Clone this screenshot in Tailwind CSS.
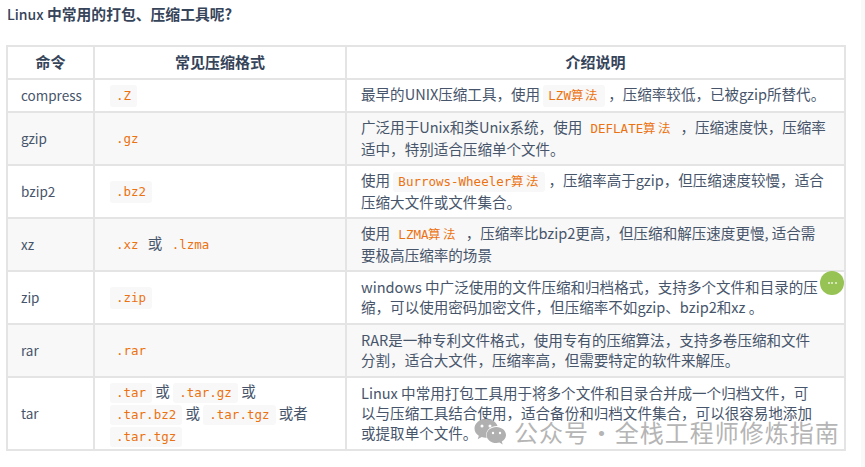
<!DOCTYPE html>
<html lang="zh-CN">
<head>
    <meta charset="UTF-8">
    <title>Linux 压缩工具</title>
    <script src="https://cdn.jsdelivr.net/npm/@tailwindcss/browser@4"></script>
</head>
<body class="w-[865px] h-[467px] overflow-hidden bg-white relative text-[#47556b] font-['Noto_Sans_CJK_SC','Noto_Sans',sans-serif] text-[14.55px]">
    <div class="absolute top-0 right-0 h-full w-[4px] bg-[#f9f9f9]"></div>
    <div class="pl-[6px] pt-[3px]">
        <p class="pl-[1px] h-[42px] text-[14.8px] leading-[22px] font-bold text-[#36445a]"><span class="font-medium text-[14px]">Linux</span> 中常用的打包、压缩工具呢?</p>
        <table class="table-fixed border-collapse w-[838px] leading-[20px]">
            <colgroup>
                <col class="w-[87px]">
                <col class="w-[252px]">
                <col class="w-[499px]">
            </colgroup>
            <thead>
                <tr class="h-[33px] text-[15px]">
                    <th class="border-2 border-[#e4e4e4] font-bold text-[#36445a] pb-[1px]">命令</th>
                    <th class="border-2 border-[#e4e4e4] font-bold text-[#36445a] pb-[1px]">常见压缩格式</th>
                    <th class="border-2 border-[#e4e4e4] font-bold text-[#36445a] pb-[1px]">介绍说明</th>
                </tr>
            </thead>
            <tbody>
                <tr class="h-[33px]">
                    <td class="border-2 border-[#e4e4e4] px-[13px] pb-[2px] text-[13.5px]">compress</td>
                    <td class="border-2 border-[#e4e4e4] px-[15px]"><code class="inline-block bg-[#f8f8f8] rounded-[3px] px-[6px] leading-[22px] font-['DejaVu_Sans_Mono',monospace] text-[12.5px] text-[#ec7211]">.Z</code></td>
                    <td class="border-2 border-[#e4e4e4] pl-[14px] pr-[12px] pb-[1px]">最早的UNIX压缩工具&#xFF0C;使用 <code class="inline-block bg-[#f8f8f8] rounded-[3px] px-[5px] leading-[22px] font-['DejaVu_Sans_Mono',monospace] text-[12.5px] text-[#ec7211]">LZW<span class="text-[12.5px] tracking-[1.5px]">算法</span></code> &#xFF0C;压缩率较低&#xFF0C;已被gzip所替代。</td>
                </tr>
                <tr class="h-[53px] bg-[#f8f8f8]">
                    <td class="border-2 border-[#e4e4e4] px-[13px] pb-[2px] text-[13.5px]">gzip</td>
                    <td class="border-2 border-[#e4e4e4] px-[15px]"><code class="inline-block rounded-[3px] px-[6px] leading-[22px] font-['DejaVu_Sans_Mono',monospace] text-[12.5px] text-[#ec7211]">.gz</code></td>
                    <td class="border-2 border-[#e4e4e4] pl-[14px] pr-[12px] pb-[1px]">广泛用于Unix和类Unix系统&#xFF0C;使用 <code class="inline-block rounded-[3px] px-[5px] leading-[20px] font-['DejaVu_Sans_Mono',monospace] text-[12.5px] text-[#ec7211]">DEFLATE<span class="text-[12.5px] tracking-[1.5px]">算法</span></code> &#xFF0C;压缩速度快&#xFF0C;压缩率适中&#xFF0C;特别适合压缩单个文件。</td>
                </tr>
                <tr class="h-[53px]">
                    <td class="border-2 border-[#e4e4e4] px-[13px] pb-[2px] text-[13.5px]">bzip2</td>
                    <td class="border-2 border-[#e4e4e4] px-[15px]"><code class="inline-block bg-[#f8f8f8] rounded-[3px] px-[6px] leading-[22px] font-['DejaVu_Sans_Mono',monospace] text-[12.5px] text-[#ec7211]">.bz2</code></td>
                    <td class="border-2 border-[#e4e4e4] pl-[14px] pr-[12px] pb-[1px]">使用 <code class="inline-block bg-[#f8f8f8] rounded-[3px] px-[5px] leading-[20px] font-['DejaVu_Sans_Mono',monospace] text-[12.5px] text-[#ec7211]">Burrows-Wheeler<span class="text-[12.5px] tracking-[1.5px]">算法</span></code> &#xFF0C;压缩率高于gzip&#xFF0C;但压缩速度较慢&#xFF0C;适合压缩大文件或文件集合。</td>
                </tr>
                <tr class="h-[53px] bg-[#f8f8f8]">
                    <td class="border-2 border-[#e4e4e4] px-[13px] pb-[2px] text-[13.5px]">xz</td>
                    <td class="border-2 border-[#e4e4e4] px-[15px]"><code class="inline-block rounded-[3px] px-[6px] leading-[22px] font-['DejaVu_Sans_Mono',monospace] text-[12.5px] text-[#ec7211]">.xz</code> 或 <code class="inline-block rounded-[3px] px-[6px] leading-[22px] font-['DejaVu_Sans_Mono',monospace] text-[12.5px] text-[#ec7211]">.lzma</code></td>
                    <td class="border-2 border-[#e4e4e4] pl-[14px] pr-[12px] pb-[1px]">使用 <code class="inline-block rounded-[3px] px-[5px] leading-[20px] font-['DejaVu_Sans_Mono',monospace] text-[12.5px] text-[#ec7211]">LZMA<span class="text-[12.5px] tracking-[1.5px]">算法</span></code> &#xFF0C;压缩率比bzip2更高&#xFF0C;但压缩和解压速度更慢, 适合需<br>要极高压缩率的场景</td>
                </tr>
                <tr class="h-[53px]">
                    <td class="border-2 border-[#e4e4e4] px-[13px] pb-[2px] text-[13.5px]">zip</td>
                    <td class="border-2 border-[#e4e4e4] px-[15px]"><code class="inline-block bg-[#f8f8f8] rounded-[3px] px-[6px] leading-[22px] font-['DejaVu_Sans_Mono',monospace] text-[12.5px] text-[#ec7211]">.zip</code></td>
                    <td class="border-2 border-[#e4e4e4] pl-[14px] pr-[12px] pb-[1px]">windows 中广泛使用的文件压缩和归档格式&#xFF0C;支持多个文件和目录的压缩&#xFF0C;可以使用密码加密文件&#xFF0C;但压缩率不如gzip、bzip2和xz 。</td>
                </tr>
                <tr class="h-[53px] bg-[#f8f8f8]">
                    <td class="border-2 border-[#e4e4e4] px-[13px] pb-[2px] text-[13.5px]">rar</td>
                    <td class="border-2 border-[#e4e4e4] px-[15px]"><code class="inline-block rounded-[3px] px-[6px] leading-[22px] font-['DejaVu_Sans_Mono',monospace] text-[12.5px] text-[#ec7211]">.rar</code></td>
                    <td class="border-2 border-[#e4e4e4] pl-[14px] pr-[12px] pb-[1px]">RAR是一种专利文件格式&#xFF0C;使用专有的压缩算法&#xFF0C;支持多卷压缩和文件<br>分割&#xFF0C;适合大文件&#xFF0C;压缩率高&#xFF0C;但需要特定的软件来解压。</td>
                </tr>
                <tr class="h-[73px]">
                    <td class="border-2 border-[#e4e4e4] px-[13px] pb-[2px] text-[13.5px]">tar</td>
                    <td class="border-2 border-[#e4e4e4] px-[15px]">
                        <code class="inline-block bg-[#f8f8f8] rounded-[3px] px-[6px] leading-[20px] font-['DejaVu_Sans_Mono',monospace] text-[12.5px] text-[#ec7211]">.tar</code> 或 <code class="inline-block bg-[#f8f8f8] rounded-[3px] px-[6px] leading-[20px] font-['DejaVu_Sans_Mono',monospace] text-[12.5px] text-[#ec7211]">.tar.gz</code> 或<br>
                        <code class="inline-block bg-[#f8f8f8] rounded-[3px] px-[6px] leading-[20px] font-['DejaVu_Sans_Mono',monospace] text-[12.5px] text-[#ec7211]">.tar.bz2</code> 或 <code class="inline-block bg-[#f8f8f8] rounded-[3px] px-[6px] leading-[20px] font-['DejaVu_Sans_Mono',monospace] text-[12.5px] text-[#ec7211]">.tar.tgz</code> 或者<br>
                        <code class="inline-block bg-[#f8f8f8] rounded-[3px] px-[6px] leading-[20px] font-['DejaVu_Sans_Mono',monospace] text-[12.5px] text-[#ec7211]">.tar.tgz</code>
                    </td>
                    <td class="border-2 border-[#e4e4e4] pl-[14px] pr-[12px] pb-[1px]">Linux 中常用打包工具用于将多个文件和目录合并成一个归档文件&#xFF0C;可<br>以与压缩工具结合使用&#xFF0C;适合备份和归档文件集合&#xFF0C;可以很容易地添加<br>或提取单个文件。</td>
                </tr>
            </tbody>
        </table>
    </div>

    <!-- floating button over the table -->
    <div class="absolute left-[820px] top-[271px] w-[24px] h-[24px] rounded-full bg-[#97c254] flex items-center justify-center gap-[1.5px]">
        <span class="w-[2px] h-[2px] rounded-full bg-white/80"></span>
        <span class="w-[2px] h-[2px] rounded-full bg-white/80"></span>
        <span class="w-[2px] h-[2px] rounded-full bg-white/80"></span>
    </div>

    <!-- watermark -->
    <div class="absolute left-[474px] top-[418px] flex items-center">
        <svg width="33" height="28" viewBox="0 0 33 28">
            <path fill="#b0b0b0" d="M12 1C5.6 1 .5 5.2.5 10.500c0 3 1.700 5.600 4.300 7.300l-1.100 3.400 4-2.100c1.300.4 2.700.6 4.100.6h.9c-.3-.9-.5-1.900-.5-2.900 0-5 4.700-8.900 10.500-8.900h.8C22.400 4.200 17.600 1 12 1z"/>
            <path fill="#b0b0b0" d="M32 17c0-4.500-4.400-8.100-9.700-8.100S12.600 12.500 12.600 17s4.400 8.100 9.700 8.100c1.100 0 2.200-.2 3.200-.5l3.200 1.800-.9-2.900c2.500-1.500 4.200-3.800 4.200-6.500z"/>
            <circle cx="8" cy="8" r="1.500" fill="#fff"/>
            <circle cx="16" cy="8" r="1.500" fill="#fff"/>
            <circle cx="19" cy="15" r="1.200" fill="#fff"/>
            <circle cx="26" cy="15" r="1.200" fill="#fff"/>
        </svg>
        <span class="ml-[7px] text-[24px] leading-[28px] tracking-[1px] text-[#b5b5b5]">公众号<span class="mx-[-6px]"> · </span>全栈工程师修炼指南</span>
    </div>
</body>
</html>
